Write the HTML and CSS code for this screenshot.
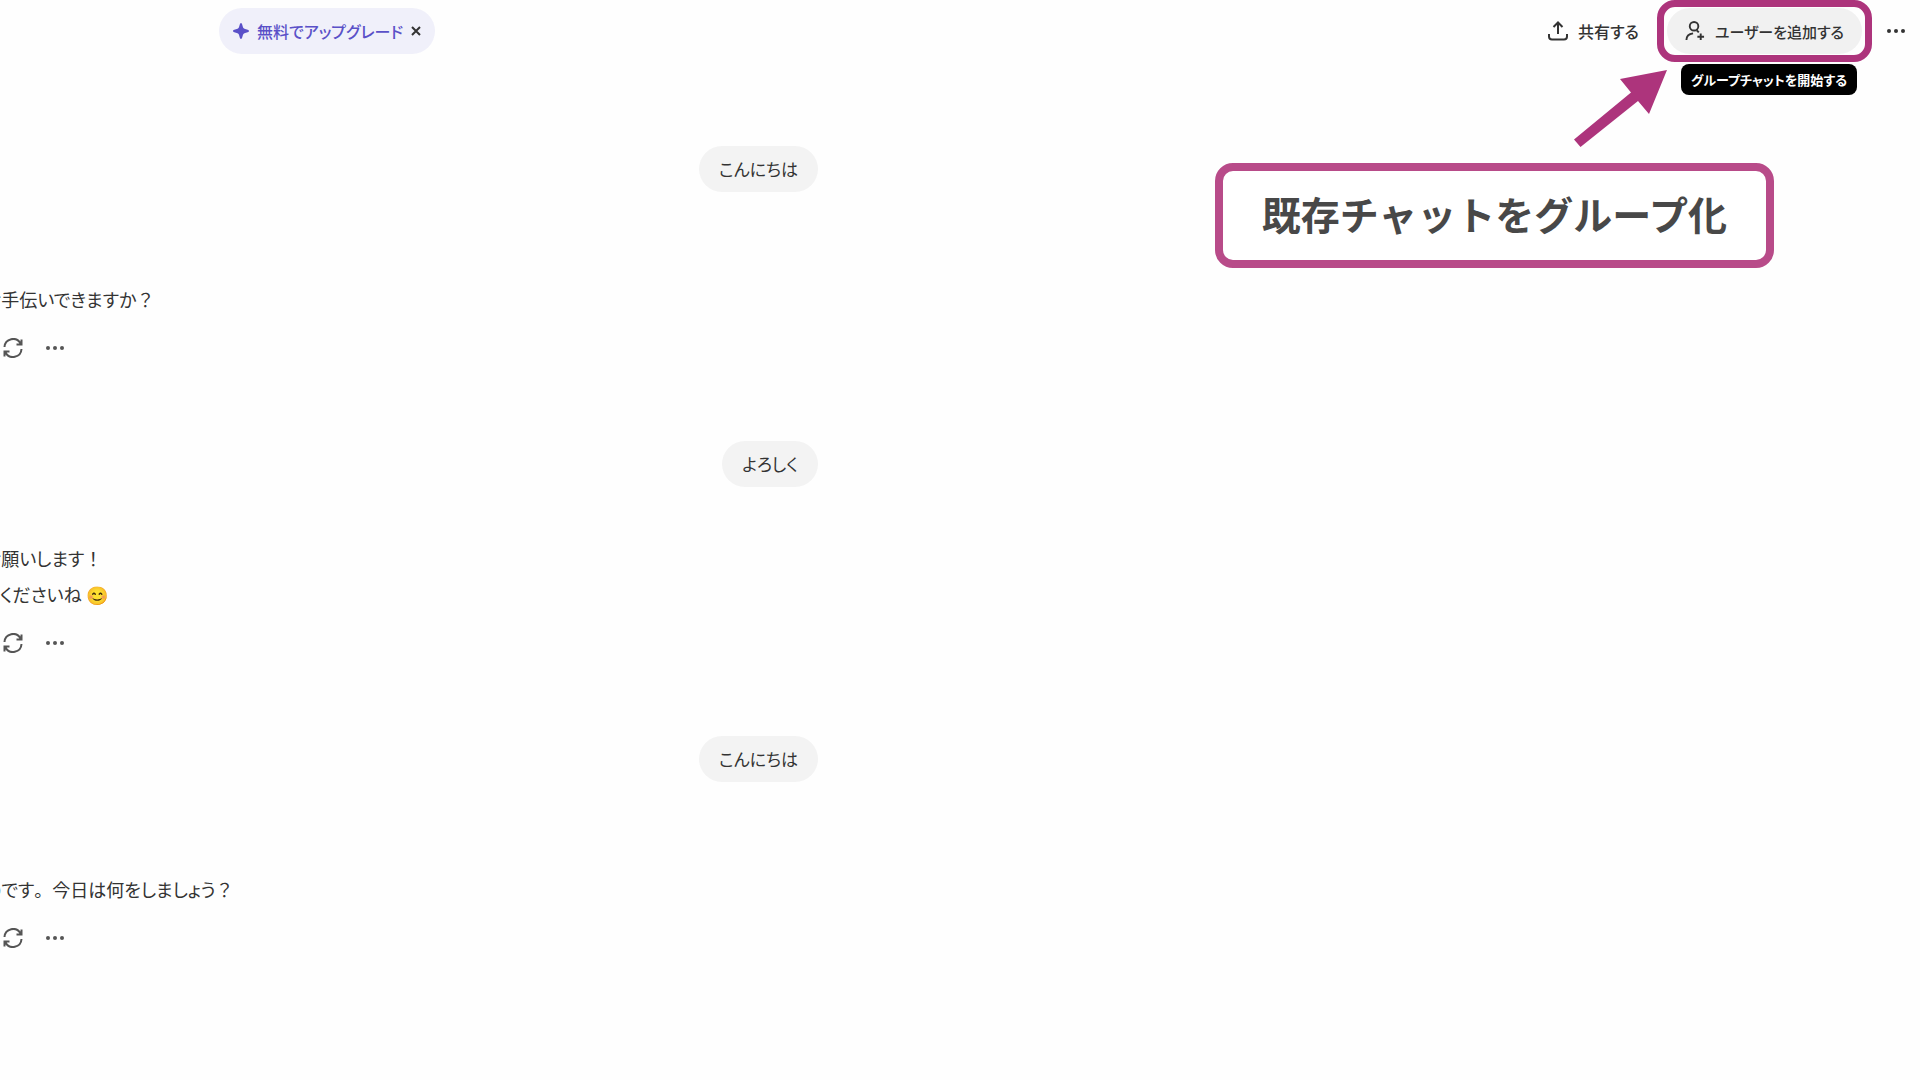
FILE: index.html
```html
<!DOCTYPE html>
<html lang="ja">

<head>
    <meta charset="UTF-8">
    <title>グループチャット</title>
    <link rel="stylesheet" href="styles.css">
</head>

<body>
    <svg class="sprite" aria-hidden="true">
        <symbol id="refresh" viewBox="0 0 20 20">
            <path d="M1.5 9A8.5 8.5 0 0 1 17.5 5.5M18.5 1.5v5h-5M18.5 11A8.5 8.5 0 0 1 2.5 14.5M1.5 18.5v-5h5" />
        </symbol>
        <symbol id="dots" viewBox="0 0 20 20">
            <circle cx="3" cy="10" r="2" />
            <circle cx="10" cy="10" r="2" />
            <circle cx="17" cy="10" r="2" />
        </symbol>
    </svg>

    <header class="header">
        <div class="upgrade">
            <button class="upgrade-button">
                <svg class="icon-star" viewBox="0 0 16 16"><path d="M8 0C9.500 0 9.500 5 11 5.500C12 6.500 16 6.500 16 8C16 9.500 12 9.500 11 10.500C9.500 11 9.500 16 8 16C6.500 16 6.500 11 5 10.500C4 9.500 0 9.500 0 8C0 6.500 4 6.500 5 5.500C6.500 5 6.500 0 8 0Z" /></svg>
                無料でアップグレード
            </button>
            <button class="close-button" aria-label="閉じる">
                <svg viewBox="0 0 10 10"><path d="M1 1L9 9M9 1L1 9" /></svg>
            </button>
        </div>

        <div class="header-actions">
            <button class="share-button">
                <svg class="icon-line" viewBox="0 0 20 20"><path d="M10 13V1.5M5.500 6L10 1.500L14.500 6M1 13v2.500a3 3 0 0 0 3 3h12a3 3 0 0 0 3-3V13" /></svg>
                共有する
            </button>
            <div class="highlight">
                <button class="add-user" aria-describedby="tooltip">
                    <svg class="icon-line" viewBox="0 0 20 21"><circle cx="9" cy="5.500" r="4.500" /><path d="M1 20c0-4 3-6.500 7-7M12 10l2 2M16 13v7M12.500 16.500h7" /></svg>
                    ユーザーを追加する
                </button>
                <div class="tooltip" id="tooltip" role="tooltip">グループチャットを開始する</div>
            </div>
            <button class="more-button" aria-label="その他"><svg><use href="#dots" /></svg></button>
        </div>
    </header>

    <main class="chat">
        <section class="turn">
            <p class="bubble">こんにちは</p>
            <div class="reply">
                <p>お手伝いできますか<span class="wide">？</span></p>
            </div>
            <div class="reply-actions">
                <button aria-label="再生成"><svg class="icon-refresh"><use href="#refresh" /></svg></button>
                <button aria-label="その他"><svg class="icon-dots"><use href="#dots" /></svg></button>
            </div>
        </section>

        <section class="turn">
            <p class="bubble">よろしく</p>
            <div class="reply">
                <p>お願いします<span class="wide">！</span></p>
                <p>てくださいね 😊</p>
            </div>
            <div class="reply-actions">
                <button aria-label="再生成"><svg class="icon-refresh"><use href="#refresh" /></svg></button>
                <button aria-label="その他"><svg class="icon-dots"><use href="#dots" /></svg></button>
            </div>
        </section>

        <section class="turn">
            <p class="bubble">こんにちは</p>
            <div class="reply">
                <p>のです<span class="wide">。</span>今日は何をしましょう<span class="wide">？</span></p>
            </div>
            <div class="reply-actions">
                <button aria-label="再生成"><svg class="icon-refresh"><use href="#refresh" /></svg></button>
                <button aria-label="その他"><svg class="icon-dots"><use href="#dots" /></svg></button>
            </div>
        </section>
    </main>

    <aside class="annotation">
        <svg class="arrow" viewBox="0 0 93 77"><path d="M93 0L75 44L64 31L6.500 77L0 69.500L57 22.500L46 9Z" /></svg>
        <p class="callout">既存チャットをグループ化</p>
    </aside>
</body>

</html>
```
FILE: styles.css
```css
:root {
    --accent: #ad347c;
    --accent-light: #b84b89;
    --text-color: #333;
    --bubble: #f3f3f3;
    --purple: #5a50c8;
}

* {
    box-sizing: border-box;
    margin: 0;
    padding: 0;
}

body {
    position: relative;
    min-height: 100vh;
    overflow-x: hidden;
    background: #fefefe;
    color: var(--text-color);
    font-family: "Noto Sans CJK JP", sans-serif;
    font-size: 18px;
    font-feature-settings: "palt";
}

button {
    display: flex;
    align-items: center;
    border: none;
    background: none;
    color: inherit;
    font: inherit;
    font-feature-settings: inherit;
    white-space: nowrap;
    cursor: pointer;
}

svg {
    display: block;
    flex: none;
}

.sprite {
    position: absolute;
    width: 0;
    height: 0;
}

/* header */
.header {
    display: flex;
    justify-content: space-between;
    align-items: center;
    height: 62px;
    padding: 0 14px 0 219px;
}

.upgrade {
    display: flex;
    align-items: center;
    gap: 8px;
    height: 46px;
    padding: 0 14px;
    border-radius: 23px;
    background: #f0f0fa;
}

.upgrade-button {
    gap: 8px;
    color: var(--purple);
    font-size: 16px;
    font-weight: 500;
}

.icon-star {
    width: 16px;
    height: 16px;
    fill: var(--purple);
}

.close-button svg {
    width: 10px;
    height: 10px;
    stroke: #333;
    stroke-width: 2;
}

.header-actions {
    display: flex;
    align-items: center;
    font-size: 16px;
    font-weight: 500;
}

.share-button {
    gap: 10px;
    margin-right: 18px;
}

.icon-line {
    width: 20px;
    height: 20px;
    fill: none;
    stroke: #333;
    stroke-width: 2;
}

.highlight {
    position: relative;
    padding: 1px 3px;
    border: 7px solid var(--accent);
    border-radius: 18px;
}

.add-user {
    gap: 10px;
    height: 46px;
    padding: 0 18px;
    border-radius: 23px;
    background: #f1f1f1;
    font-size: 15px;
}

.tooltip {
    position: absolute;
    top: 57px;
    right: 8px;
    padding: 0 10px;
    border-radius: 8px;
    background: #000;
    color: #fff;
    font-size: 13px;
    font-weight: 700;
    line-height: 31px;
    white-space: nowrap;
}

.more-button {
    margin-left: 14px;
}

.more-button svg {
    width: 20px;
    height: 20px;
    fill: #333;
}

/* the chat column starts a little past the left edge */
.chat {
    max-width: 834px;
    margin-left: -16px;
    padding-top: 84px;
}

.turn {
    display: flex;
    flex-direction: column;
    margin-bottom: 75px;
}

.bubble {
    align-self: flex-end;
    padding: 0 20px;
    border-radius: 23px;
    background: var(--bubble);
    font-size: 17px;
    line-height: 46px;
}

.reply {
    display: flex;
    flex-direction: column;
    justify-content: flex-end;
    min-height: 72px;
    margin-top: 53px;
    line-height: 36px;
}

.wide {
    font-feature-settings: normal;
}

.reply-actions {
    display: flex;
    gap: 22px;
    margin-top: 13px;
    padding-left: 19px;
}

.reply-actions button {
    height: 36px;
}

.icon-refresh {
    width: 20px;
    height: 20px;
    fill: none;
    stroke: #555;
    stroke-width: 2;
}

.icon-dots {
    width: 20px;
    height: 20px;
    fill: #555;
}

/* annotation over the page */
.annotation {
    position: absolute;
    top: 70px;
    right: 146px;
}

.arrow {
    width: 93px;
    height: 77px;
    margin-left: 359px;
    fill: var(--accent);
}

.callout {
    margin-top: 16px;
    padding: 0 39px 4px;
    border: 8px solid var(--accent-light);
    border-radius: 18px;
    background: #fff;
    color: #484848;
    font-size: 39px;
    font-weight: 700;
    font-feature-settings: normal;
    line-height: 85px;
    white-space: nowrap;
}
```
